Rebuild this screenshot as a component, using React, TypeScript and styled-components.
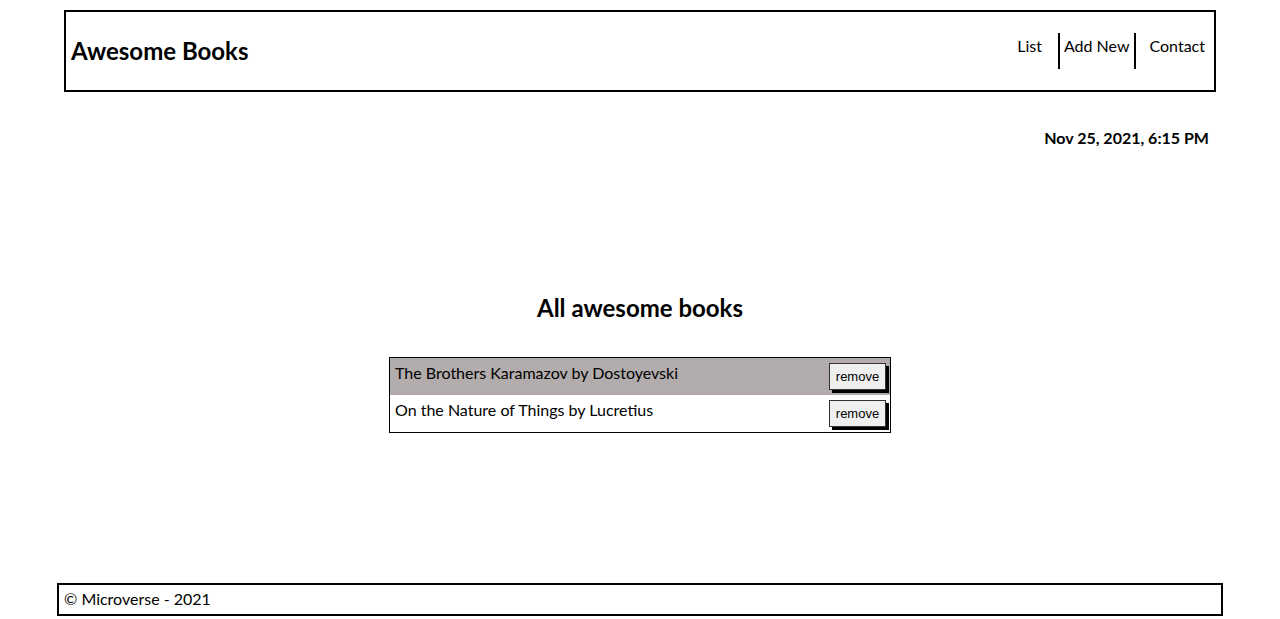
import React from "react";
import styled, { createGlobalStyle } from "styled-components";

const GlobalStyle = createGlobalStyle`
  html, body { margin: 0; padding: 0; }
  body {
    font-family: Lato, "DejaVu Sans", sans-serif;
    color: #000;
    background: #fff;
  }
  * { box-sizing: border-box; }
`;

const Page = styled.div`
  min-height: 619px;
  display: flex;
  flex-direction: column;
  align-items: center;
`;

const Header = styled.header`
  width: 1152px;
  height: 82px;
  margin-top: 10px;
  border: 2px solid #000;
  display: flex;
  align-items: center;
  justify-content: space-between;
  padding: 0 9px 0 5px;
`;

const Title = styled.h1`
  margin: 0 0 2px;
  font-size: 24px;
  line-height: 29px;
  font-weight: 700;
`;

const Nav = styled.ul`
  list-style: none;
  margin: 0;
  padding: 0;
  display: flex;
  align-items: stretch;
  height: 36px;
`;

const NavItem = styled.li<{ $bordered?: boolean }>`
  font-size: 16px;
  line-height: 26px;
  padding: 0 ${(p) => (p.$bordered ? "4px" : "0")} 0 ${(p) => (p.$bordered ? "4px" : "0")};
  margin: 0 ${(p) => (p.$bordered ? "14px" : "0")} 0 ${(p) => (p.$bordered ? "16px" : "0")};
  border-left: ${(p) => (p.$bordered ? "2px solid #000" : "none")};
  border-right: ${(p) => (p.$bordered ? "2px solid #000" : "none")};
`;

const Main = styled.main`
  width: 1152px;
  display: flex;
  flex-direction: column;
  align-items: center;
`;

const DateLine = styled.p`
  align-self: flex-end;
  margin: 36px 7px 0 0;
  font-size: 16px;
  line-height: 19px;
  font-weight: 700;
`;

const SectionTitle = styled.h2`
  margin: 146px 0 0;
  font-size: 24px;
  line-height: 29px;
  font-weight: 700;
`;

const BookList = styled.ul`
  list-style: none;
  margin: 35px 0 0;
  padding: 0;
  width: 502px;
  border: 1px solid #000;
`;

const BookRow = styled.li<{ $shaded?: boolean }>`
  display: flex;
  justify-content: space-between;
  align-items: flex-start;
  padding: 5px 4px 5px 5px;
  height: 37px;
  background: ${(p) => (p.$shaded ? "#b2acac" : "#fff")};
`;

const BookText = styled.span`
  font-size: 16px;
  line-height: 20px;
`;

const RemoveButton = styled.button`
  font-family: "Liberation Sans", Arial, sans-serif;
  font-size: 13px;
  height: 27px;
  width: 57px;
  padding: 0;
  background: #efefef;
  border: 1px solid #333;
  box-shadow: 3px 3px 0 #000;
  color: #000;
`;

const Footer = styled.footer`
  width: 1166px;
  height: 33px;
  margin: auto 0 3px;
  border: 2px solid #000;
  padding: 3px 5px 5px;
  font-size: 16px;
  line-height: 21px;
`;

const books = [
  { id: 1, text: "The Brothers Karamazov by Dostoyevski" },
  { id: 2, text: "On the Nature of Things by Lucretius" },
];

export default function App() {
  return (
    <>
      <GlobalStyle />
      <Page>
        <Header>
          <Title>Awesome Books</Title>
          <Nav>
            <NavItem>List</NavItem>
            <NavItem $bordered>Add New</NavItem>
            <NavItem>Contact</NavItem>
          </Nav>
        </Header>
        <Main>
          <DateLine>Nov 25, 2021, 6:15 PM</DateLine>
          <SectionTitle>All awesome books</SectionTitle>
          <BookList>
            {books.map((b, i) => (
              <BookRow key={b.id} $shaded={i % 2 === 0}>
                <BookText>{b.text}</BookText>
                <RemoveButton>remove</RemoveButton>
              </BookRow>
            ))}
          </BookList>
        </Main>
        <Footer>© Microverse - 2021</Footer>
      </Page>
    </>
  );
}
